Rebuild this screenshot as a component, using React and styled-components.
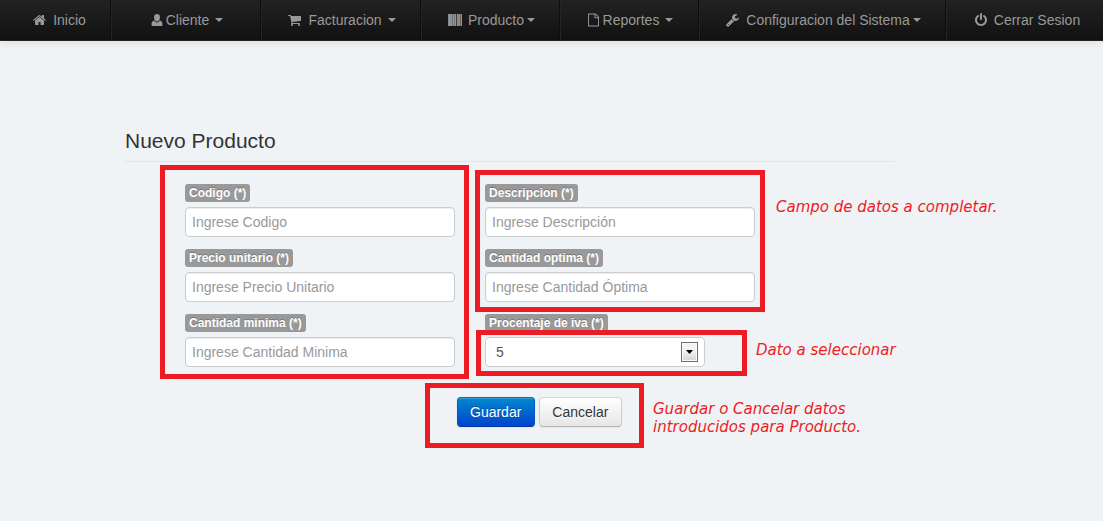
import React from "react";
import styled, { createGlobalStyle } from "styled-components";

const GlobalStyle = createGlobalStyle`
  * { box-sizing: border-box; }
  body {
    margin: 0;
    background: #eff3f6;
    color: #333;
    font-family: "Liberation Sans", Arial, sans-serif;
    font-size: 14px;
    line-height: 20px;
  }
`;

const NavBar = styled.nav`
  height: 41px;
  padding-left: 9px;
  display: grid;
  grid-template-columns: 102fr 150fr 160fr 139fr 139fr 247fr 157fr;
  background: linear-gradient(#222, #111);
  border-bottom: 1px solid #252525;
  box-shadow: 0 1px 10px rgba(0, 0, 0, 0.1);
`;

const NavLink = styled.a`
  display: flex;
  align-items: center;
  justify-content: center;
  padding-left: 2px;
  color: #999;
  text-decoration: none;
  white-space: nowrap;
  border-left: 1px solid #242424;
  border-right: 1px solid #0e0e0e;
  &:first-child { border-left: 0; padding-left: 0; }
  &:last-child { border-right: 0; padding-left: 5px; }
`;

const Icon = styled.svg`
  width: ${(p) => p.$width}px;
  height: 14px;
  margin-right: ${(p) => p.$gap}px;
  fill: currentColor;
`;

const Caret = styled.span`
  margin-left: ${(p) => p.$gap}px;
  border: 4px solid transparent;
  border-top-color: currentColor;
  border-bottom: 0;
`;

const Page = styled.main`
  position: relative;
  max-width: 895px;
  padding: 85px 0 40px 125px;
`;

const Title = styled.h1`
  margin: 0;
  padding: 0 0 5px;
  border-bottom: 1px solid #e1e5e8;
  font-size: 21px;
  line-height: 30px;
  font-weight: 400;
`;

const Fields = styled.div`
  display: grid;
  grid-template-columns: 270px 270px;
  gap: 12px 30px;
  padding: 22px 0 0 60px;
`;

const Field = styled.div`
  display: flex;
  flex-direction: column;
  align-items: flex-start;
  gap: 5px;
`;

const Label = styled.label`
  padding: 2px 4px;
  border-radius: 3px;
  background: #999;
  color: #fff;
  font-size: 12px;
  line-height: 14px;
  font-weight: 700;
  text-shadow: 0 -1px 0 rgba(0, 0, 0, 0.25);
`;

const TextInput = styled.input`
  width: 100%;
  height: 30px;
  padding: 4px 6px;
  border: 1px solid #ccc;
  border-radius: 4px;
  background: #fff;
  box-shadow: inset 0 1px 1px rgba(0, 0, 0, 0.075);
  font: inherit;
  color: #555;
  &::placeholder { color: #999; opacity: 1; }
`;

const SelectWrap = styled.div`
  position: relative;
  width: 220px;
`;

const Select = styled.select`
  appearance: none;
  display: block;
  width: 100%;
  height: 30px;
  padding: 4px 10px;
  border: 1px solid #ccc;
  border-radius: 4px;
  background: #fff;
  font: inherit;
  color: #555;
`;

const SelectArrow = styled.span`
  position: absolute;
  top: 5px;
  right: 7px;
  width: 17px;
  height: 20px;
  display: grid;
  place-items: center;
  border: 1px solid #707070;
  background: linear-gradient(#f3f3f3 45%, #d4d4d4);
  box-shadow: inset 0 0 0 1px #fafafa;
  pointer-events: none;
`;

const Actions = styled.div`
  display: flex;
  gap: 4px;
  padding: 30px 0 0 332px;
`;

const Button = styled.button`
  height: 30px;
  padding: 4px 13px 4px 12px;
  border: 1px solid;
  border-color: ${(p) => (p.$primary ? "#0072b8 #0055c0 #003ba5" : "#d3d5d6 #cccecf #b3b3b3")};
  border-radius: 4px;
  background: ${(p) => (p.$primary ? "linear-gradient(#0088cc, #0044cc)" : "linear-gradient(#fff, #e6e6e6)")};
  box-shadow: inset 0 1px 0 rgba(255, 255, 255, 0.2), 0 1px 2px rgba(0, 0, 0, 0.05);
  color: ${(p) => (p.$primary ? "#fff" : "#333")};
  text-shadow: ${(p) => (p.$primary ? "0 -1px 0 rgba(0, 0, 0, 0.25)" : "0 1px 1px rgba(255, 255, 255, 0.75)")};
  font: inherit;
`;

const Highlight = styled.div`
  position: absolute;
  left: ${(p) => p.$x}px;
  top: ${(p) => p.$y}px;
  width: ${(p) => p.$w}px;
  height: ${(p) => p.$h}px;
  border: 5px solid #ed1c24;
  pointer-events: none;
`;

const Note = styled.p`
  position: absolute;
  left: ${(p) => p.$x}px;
  top: ${(p) => p.$y}px;
  margin: 0;
  color: #ed1c24;
  font-family: "DejaVu Sans", sans-serif;
  font-style: italic;
  font-size: 15px;
  line-height: 18px;
  white-space: nowrap;
`;

const PATHS = {
  home: "M1472 992v480q0 26-19 45t-45 19h-384v-384h-256v384h-384q-26 0-45-19t-19-45v-480q0-1 .5-3t.5-3l575-474 575 474q1 2 1 6zm223-69l-62 74q-8 9-21 11h-3q-13 0-21-7l-692-577-692 577q-12 8-24 7-13-2-21-11l-62-74q-8-10-7-23.5t11-21.5l719-599q32-26 76-26t76 26l244 204v-195q0-14 9-23t23-9h192q14 0 23 9t9 23v408l219 182q10 8 11 21.5t-7 23.5z",
  user: "M6 1C8 1 9 2.500 9 4.500S7.800 8.500 6 8.500 3 6.500 3 4.500 4 1 6 1zM.5 11.500C.5 9 1.500 8.200 3.200 7.600 4 8.900 5 9.400 6 9.400s2-.5 2.800-1.800c1.700.6 2.700 1.400 2.700 3.900 0 1-.6 1.500-1.500 1.500H2C1.100 13 .5 12.500 .5 11.500z",
  cart: "M704 1536q0 52-38 90t-90 38-90-38-38-90 38-90 90-38 90 38 38 90zm896 0q0 52-38 90t-90 38-90-38-38-90 38-90 90-38 90 38 38 90zm128-1088v512q0 24-16.5 42.5t-40.5 21.5l-1044 122q13 60 13 70 0 16-24 64h920q26 0 45 19t19 45-19 45-45 19h-1024q-26 0-45-19t-19-45q0-11 8-31.5t16-36 21.5-40 15.5-29.5l-177-823h-204q-26 0-45-19t-19-45 19-45 45-19h256q16 0 28.5 6.5t19.5 15.5 13 24.5 8 26 5.5 29.5 4.5 26h1201q26 0 45 19t19 45z",
  file: "M1596 380q28 28 48 76t20 88v1152q0 40-28 68t-68 28h-1344q-40 0-68-28t-28-68v-1600q0-40 28-68t68-28h896q40 0 88 20t76 48zm-444-244v376h376q-10-29-22-41l-313-313q-12-12-41-22zm384 1528v-1024h-416q-40 0-68-28t-28-68v-416h-768v1536h1280z",
  wrench: "M448 1472q0-26-19-45t-45-19-45 19-19 45 19 45 45 19 45-19 19-45zm644-420l-682 682q-37 37-90 37-52 0-91-37l-106-108q-38-36-38-90 0-53 38-91l681-681q39 98 114.5 173.5t173.5 114.5zm634-435q0 39-23 106-47 134-164.5 217.5t-258.5 83.5q-185 0-316.5-131.5t-131.5-316.5 131.5-316.5 316.5-131.5q58 0 121.5 16.5t107.5 46.5q16 11 16 28t-16 28l-293 169v224l193 107q5-3 79-48.5t135.5-81 70.5-35.5q15 0 23.5 10t8.5 25z",
  power: "M1664 896q0 156-61 298t-164 245-245 164-298 61-298-61-245-164-164-245-61-298q0-182 80.5-343t226.5-270q43-32 95.5-25t83.5 50q32 42 24.5 94.5t-49.5 84.5q-98 74-151.5 181t-53.5 228q0 104 40.5 198.5t109.5 163.5 163.5 109.5 198.5 40.5 198.5-40.5 163.5-109.5 109.5-163.5 40.5-198.5q0-121-53.5-228t-151.5-181q-42-32-49.5-84.5t24.5-94.5q31-43 84-50t95 25q146 109 226.5 270t80.5 343zm-640-768v640q0 52-38 90t-90 38-90-38-38-90v-640q0-52 38-90t90-38 90 38 38 90z",
};

const BARS = [
  "#7d8799", "#999a90", "#7f9a90", "#8f8f8f", "#7b6a7a", "#99948c", "#6d7a7b",
  "#8c9a84", "#4b3b43", "#94848c", "#7d8f80", "#8f8c99", "#7b5a5a", "#97978a",
];

const NAV = [
  { text: "Inicio", icon: "home", box: "64 0 1664 1792", width: 13, gap: 7 },
  { text: "Cliente", icon: "user", box: "0 0 12 14", width: 12, gap: 3, caret: 6 },
  { text: "Facturacion", icon: "cart", box: "64 0 1664 1792", width: 13, gap: 7, caret: 6 },
  { text: "Producto", icon: "barcode", box: "0 0 14 14", width: 14, gap: 6, caret: 3 },
  { text: "Reportes", icon: "file", box: "128 0 1536 1792", width: 11, gap: 4, caret: 6 },
  { text: "Configuracion del Sistema", icon: "wrench", box: "64 0 1664 1792", width: 13, gap: 7, caret: 3 },
  { text: "Cerrar Sesion", icon: "power", box: "128 0 1536 1792", width: 12, gap: 7 },
];

const FIELDS = [
  { id: "codigo", label: "Codigo (*)", placeholder: "Ingrese Codigo" },
  { id: "descripcion", label: "Descripcion (*)", placeholder: "Ingrese Descripción" },
  { id: "precio", label: "Precio unitario (*)", placeholder: "Ingrese Precio Unitario" },
  { id: "optima", label: "Cantidad optima (*)", placeholder: "Ingrese Cantidad Óptima" },
  { id: "minima", label: "Cantidad minima (*)", placeholder: "Ingrese Cantidad Minima" },
];

export default function App() {
  return (
    <>
      <GlobalStyle />
      <NavBar>
        {NAV.map((item) => (
          <NavLink href="#" key={item.text}>
            <Icon viewBox={item.box} $width={item.width} $gap={item.gap} aria-hidden="true">
              {item.icon === "barcode" ? (
                BARS.map((fill, i) => <rect key={i} x={i} y="1" width="1" height="12" fill={fill} />)
              ) : (
                <path d={PATHS[item.icon]} />
              )}
            </Icon>
            {item.text}
            {item.caret && <Caret $gap={item.caret} />}
          </NavLink>
        ))}
      </NavBar>
      <Page>
        <Title>Nuevo Producto</Title>
        <form onSubmit={(e) => e.preventDefault()}>
          <Fields>
            {FIELDS.map((f) => (
              <Field key={f.id}>
                <Label htmlFor={f.id}>{f.label}</Label>
                <TextInput id={f.id} placeholder={f.placeholder} />
              </Field>
            ))}
            <Field>
              <Label htmlFor="iva">Procentaje de iva (*)</Label>
              <SelectWrap>
                <Select id="iva" defaultValue="5">
                  <option value="5">5</option>
                  <option value="10">10</option>
                </Select>
                <SelectArrow>
                  <svg width="7" height="4" viewBox="0 0 7 4" aria-hidden="true">
                    <path d="M0 0h7L3.500 4z" />
                  </svg>
                </SelectArrow>
              </SelectWrap>
            </Field>
          </Fields>
          <Actions>
            <Button type="submit" $primary>Guardar</Button>
            <Button type="button">Cancelar</Button>
          </Actions>
        </form>
        <Highlight $x={160} $y={124} $w={309} $h={214} />
        <Highlight $x={475} $y={129} $w={290} $h={142} />
        <Highlight $x={476} $y={289} $w={271} $h={46} />
        <Highlight $x={425} $y={342} $w={219} $h={65} />
        <Note $x={776} $y={157}>Campo de datos a completar.</Note>
        <Note $x={756} $y={300}>Dato a seleccionar</Note>
        <Note $x={653} $y={359}>
          Guardar o Cancelar datos
          <br />
          introducidos para Producto.
        </Note>
      </Page>
    </>
  );
}
